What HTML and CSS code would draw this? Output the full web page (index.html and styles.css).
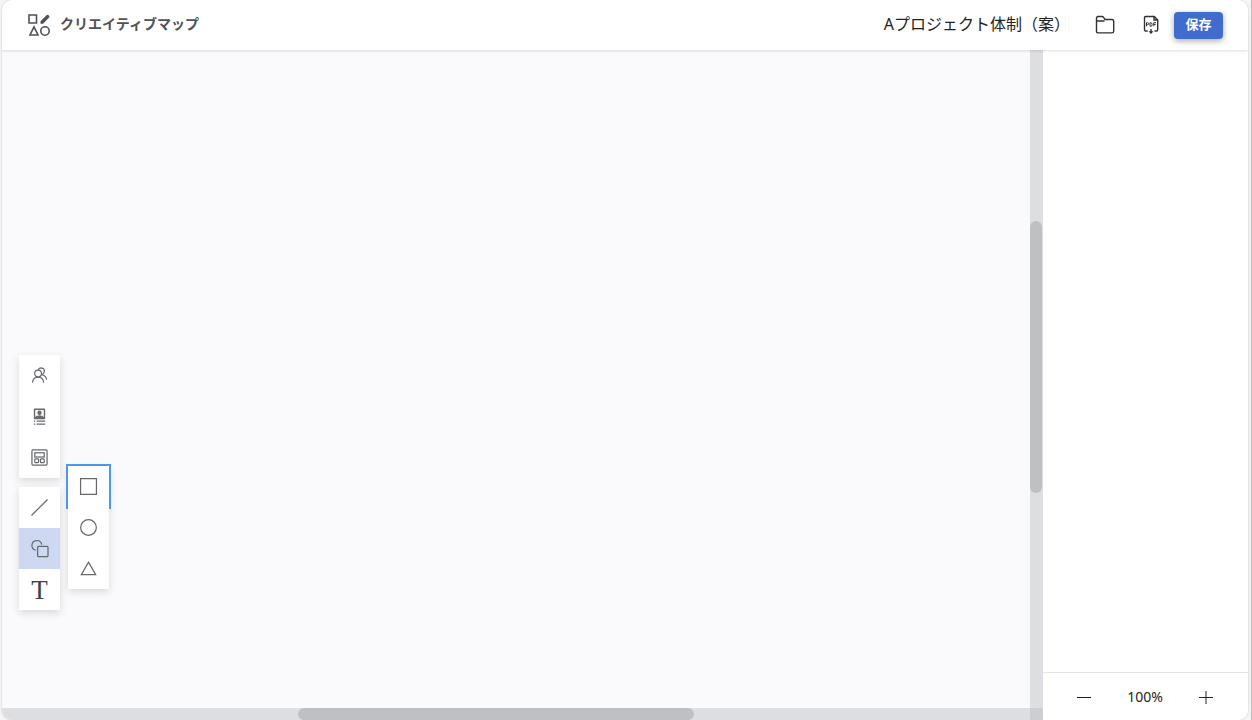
FILE: index.html
```html
<!DOCTYPE html>
<html lang="ja">
<head>
<meta charset="utf-8">
<title>クリエイティブマップ</title>
<link rel="stylesheet" href="styles.css">
</head>
<body>
<div class="app">
  <header class="header">
    <h1 class="brand">
      <svg class="brand-icon" viewBox="0 0 22 22" aria-hidden="true"><path d="M1 1h7.500v8H1zM6 12.800 10 21H2z"/><path class="pencil" d="M12.500 9.800v-2.600l6-6q1-1 2 0l.6.6q.8.9 0 1.800l-6 6.200z"/><circle cx="17" cy="17" r="4.200"/></svg>
      <span>クリエイティブマップ</span>
    </h1>
    <span class="doc-title">Aプロジェクト体制（案）</span>
    <button class="icon-button" type="button" aria-label="開く">
      <svg class="action-icon" viewBox="0 0 20 20"><path d="M1.500 6V3q0-1.500 1.500-1.500h4.200q.7 0 1.200.6L10 4.500h7q1.700 0 1.700 1.700v10q0 1.700-1.700 1.700H3.200q-1.700 0-1.700-1.700V6h8"/></svg>
    </button>
    <button class="icon-button" type="button" aria-label="PDF出力">
      <svg class="action-icon" viewBox="0 0 20 20"><path d="M3.500 6V2.700q0-1.200 1.200-1.200h8.600L16.700 5v1M13 1.500V5h3.700M3.500 12.500v2.300q0 1.200 1.200 1.200h2M16.700 12.500v2.300q0 1.200-1.200 1.200h-2M3.500 5v9M16.700 5v9M10 14v4"/><path class="arrow" d="M7.500 16.200h5L10 19z"/><path class="pdf-mark" d="M5.500 11.300V7.700h1q1.200 0 1.200 1t-1.200 1h-1M9 11.300V7.700h.6q1.600 0 1.600 1.800t-1.600 1.800zM12.800 11.300V7.700h2.200M12.800 9.500h1.800"/></svg>
    </button>
    <button class="save" type="button">保存</button>
  </header>
  <main class="workspace">
    <section class="canvas" aria-label="キャンバス">
      <div class="tools">
        <div class="palette">
          <div class="group">
            <button class="tool" type="button" aria-label="メンバー"><svg viewBox="0 0 18 18"><circle cx="7.500" cy="7" r="3.600"/><path d="M1.500 16.500q.7-5.800 6-5.800t6 5.800M7.500 3q1-2 3.500-2 3.200.3 3.200 3.600 0 2.200-2.300 3.600 4.300 1.300 4.600 5.300"/></svg></button>
            <button class="tool" type="button" aria-label="プロフィール"><svg viewBox="0 0 18 18"><path class="solid" fill-rule="evenodd" d="M3 1.500Q3 .5 4 .5h10q1 0 1 1v10.500H3zM4.500 2v7.500q1.500-1.700 4.500-1.700t4.500 1.700V2z"/><circle class="solid" cx="9" cy="5" r="2.300"/><path d="M3 14h1.500M6 14h9M3 17h1.500M6 17h9"/></svg></button>
            <button class="tool" type="button" aria-label="レイアウト"><svg viewBox="0 0 18 18"><rect x="1" y="1" width="16" height="16" rx="1"/><rect x="4" y="4" width="10" height="4.500"/><rect x="4" y="10.500" width="4" height="4" rx="1"/><rect x="10" y="10.500" width="4" height="4" rx="1"/></svg></button>
          </div>
          <div class="group">
            <button class="tool" type="button" aria-label="線"><svg viewBox="0 0 18 18"><path d="M.5 17.500 17.500.5"/></svg></button>
            <button class="tool selected" type="button" aria-label="図形" aria-expanded="true"><svg viewBox="0 0 18 18"><path d="M5 10.800a5.200 5.200 0 1 1 6.300-6"/><rect x="7" y="6.700" width="11" height="11" rx="1"/></svg></button>
            <button class="tool text-tool" type="button" aria-label="テキスト">T</button>
          </div>
        </div>
        <div class="group shapes">
          <button class="tool focused" type="button" aria-label="四角形"><svg viewBox="0 0 18 18"><path d="M.6.6h16.800v16.800H.6z"/></svg></button>
          <button class="tool" type="button" aria-label="円"><svg viewBox="0 0 18 18"><circle cx="9" cy="9" r="8.300"/></svg></button>
          <button class="tool" type="button" aria-label="三角形"><svg viewBox="0 0 18 18"><path d="m9 2.300 7.600 13.300H1.400z"/></svg></button>
        </div>
      </div>
    </section>
    <div class="track-y"><div class="thumb-y"></div></div>
    <div class="track-x"><div class="thumb-x"></div></div>
    <div class="corner"></div>
    <aside class="panel">
      <div class="zoom">
        <button class="icon-button" type="button" aria-label="縮小"><svg class="zoom-icon" viewBox="0 0 16 16"><path d="M1 8.500h14"/></svg></button>
        <output class="zoom-value">100%</output>
        <button class="icon-button" type="button" aria-label="拡大"><svg class="zoom-icon" viewBox="0 0 16 16"><path d="M1 8.500h14M8 2v13"/></svg></button>
      </div>
    </aside>
  </main>
</div>
</body>
</html>
```
FILE: styles.css
```css
* {
  box-sizing: border-box;
}

body {
  margin: 0;
  padding: 0 4px 0 2px;
  height: 100vh;
  background: linear-gradient(#bbb, #bbb) right / 1px 100% no-repeat #f5f5f6;
  font-family: "Noto Sans", "Noto Sans CJK JP", sans-serif;
  color: #222;
}

.app {
  display: flex;
  flex-direction: column;
  height: 100%;
  overflow: hidden;
  border-radius: 10px;
  background: #fff;
  box-shadow: 0 0 2px #bbb;
}

button {
  padding: 0;
  border: 0;
  font: inherit;
  color: inherit;
  background: none;
}

svg {
  display: block;
  fill: none;
  stroke: currentColor;
}

.header {
  z-index: 1;
  flex: none;
  display: flex;
  align-items: center;
  height: 50px;
  padding: 0 25px 0 26px;
  background: #fff;
  box-shadow: 0 1px 3px #0002;
}

.brand {
  display: flex;
  align-items: center;
  gap: 10px;
  margin: 0 auto 0 0;
  font-size: 14px;
  line-height: 20px;
  color: #505256;
}

.brand span {
  padding-bottom: 2px;
}

.brand-icon {
  width: 22px;
  height: 22px;
  stroke-width: 1.6;
}

.pencil {
  fill: currentColor;
  stroke: none;
}

.doc-title {
  margin-right: 12px;
  padding-bottom: 2px;
  font-size: 16px;
  line-height: 24px;
}

.icon-button {
  display: grid;
  place-items: center;
  width: 46px;
  height: 40px;
}

.action-icon {
  width: 20px;
  height: 20px;
  stroke-width: 1.4;
  color: #303236;
}

.arrow {
  fill: currentColor;
  stroke: none;
}

.pdf-mark {
  stroke-width: 1;
}

.save {
  width: 49px;
  height: 27px;
  padding-bottom: 2px;
  border-radius: 4px;
  background: #3f6ccd;
  box-shadow: 0 2px 6px #0005;
  color: #fff;
  font-size: 13px;
  font-weight: 700;
  line-height: 20px;
}

.workspace {
  flex: 1;
  min-height: 0;
  display: grid;
  grid-template-columns: 1fr 13px 205px;
  grid-template-rows: 1fr 12px;
}

.canvas {
  position: relative;
  background: #fafafc;
}

.tools {
  position: absolute;
  left: 17px;
  bottom: 98px;
  display: flex;
  align-items: flex-end;
  gap: 8px;
}

.palette {
  display: grid;
  gap: 9px;
}

.group {
  background: #fff;
  box-shadow: 0 3px 8px #0002;
}

.shapes {
  margin-bottom: 21px;
}

.tool {
  display: grid;
  place-items: center;
  width: 41px;
  height: 41px;
  color: #66686c;
  background: #fff;
  position: relative;
}

.tool svg {
  width: 17px;
  height: 17px;
  overflow: visible;
  stroke-width: 1.3;
}

.tool .solid {
  fill: currentColor;
  stroke: none;
}

.selected {
  background: #cdd9f2;
}

.focused {
  box-shadow: 0 0 0 2px #4b98ee;
}

.text-tool {
  font-family: "Liberation Serif", serif;
  font-size: 27px;
  line-height: 28px;
  color: #404246;
}

.track-y {
  grid-column: 2;
  background: #dddee1;
}

.thumb-y {
  width: 12px;
  height: 272px;
  margin-top: 171px;
  border-radius: 6px;
  background: #bfc0c3;
}

.track-x {
  grid-row: 2;
  background: #dddee1;
}

.thumb-x {
  width: 396px;
  height: 12px;
  margin-left: 296px;
  border-radius: 6px;
  background: #bfc0c3;
}

.corner {
  grid-area: 2 / 2;
  background: #cdced2;
}

.panel {
  grid-area: 1 / 3 / 3 / 4;
  display: flex;
  flex-direction: column;
  justify-content: flex-end;
  background: #fff;
}

.zoom {
  display: flex;
  align-items: center;
  justify-content: space-between;
  height: 48px;
  padding: 0 19px 0 18px;
  border-top: 1px solid #e4e4e7;
}

.zoom-icon {
  width: 16px;
  height: 16px;
}

.zoom-value {
  font-size: 14px;
  line-height: 24px;
}
```
